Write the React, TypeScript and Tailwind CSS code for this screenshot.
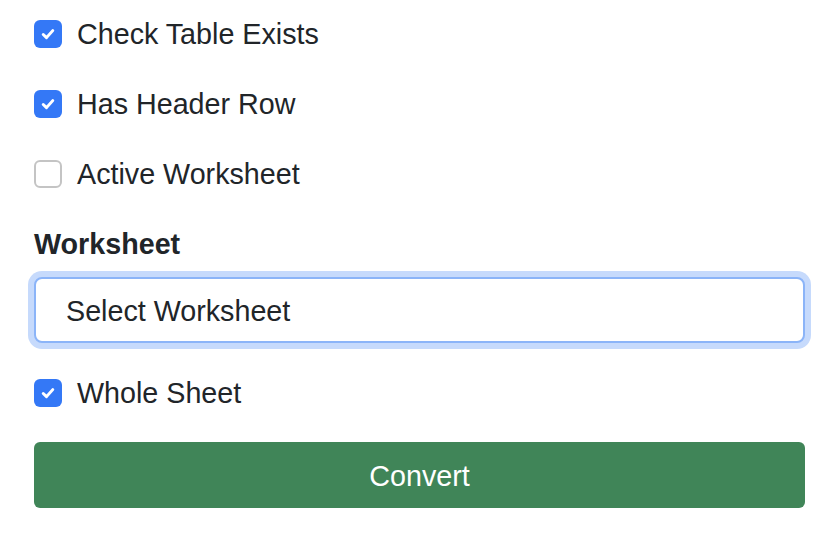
import { useState } from 'react';

function CheckBox({ checked, onToggle }: { checked: boolean; onToggle: () => void }) {
  return (
    <button
      type="button"
      onClick={onToggle}
      className={
        checked
          ? 'flex h-[28px] w-[28px] shrink-0 items-center justify-center rounded-[6px] bg-[#3478f6]'
          : 'flex h-[28px] w-[28px] shrink-0 items-center justify-center rounded-[6px] border-2 border-[#c4c4c4] bg-white'
      }
    >
      {checked && (
        <svg width="20" height="20" viewBox="0 0 16 16" fill="none">
          <path d="M4.2 8.4l2.6 2.5 5-5.6" stroke="white" strokeWidth="2.4" strokeLinecap="round" strokeLinejoin="round" />
        </svg>
      )}
    </button>
  );
}

export default function App() {
  const [tableExists, setTableExists] = useState(true);
  const [headerRow, setHeaderRow] = useState(true);
  const [activeSheet, setActiveSheet] = useState(false);
  const [wholeSheet, setWholeSheet] = useState(true);

  const rows = [
    { label: 'Check Table Exists', value: tableExists, toggle: () => setTableExists(!tableExists) },
    { label: 'Has Header Row', value: headerRow, toggle: () => setHeaderRow(!headerRow) },
    { label: 'Active Worksheet', value: activeSheet, toggle: () => setActiveSheet(!activeSheet) },
  ];

  return (
    <div className="min-h-screen bg-white pl-[34px] pr-[27px] pt-[14px] text-[28.7px] text-[#212529] [font-family:'Liberation_Sans',Arial,sans-serif]">
      {rows.map((r) => (
        <div key={r.label} className="mb-[30px] flex h-[40px] items-center gap-[15px]">
          <CheckBox checked={r.value} onToggle={r.toggle} />
          <span className="pt-[2px]">{r.label}</span>
        </div>
      ))}

      <div className="flex h-[40px] items-center pt-[2px] font-bold">Worksheet</div>

      <div className="mt-[13px] flex h-[66px] items-center rounded-[8px] border-2 border-[#8bb4f8] bg-white px-[30px] pt-[4px] shadow-[0_0_0_6px_#c6dafc]">
        Select Worksheet
      </div>

      <div className="mt-[30px] flex h-[40px] items-center gap-[15px]">
        <CheckBox checked={wholeSheet} onToggle={() => setWholeSheet(!wholeSheet)} />
        <span className="pt-[2px]">Whole Sheet</span>
      </div>

      <button
        type="button"
        className="mt-[29px] flex h-[66px] w-full items-center justify-center rounded-[6px] bg-[#408558] pt-[4px] text-white"
      >
        Convert
      </button>
    </div>
  );
}
